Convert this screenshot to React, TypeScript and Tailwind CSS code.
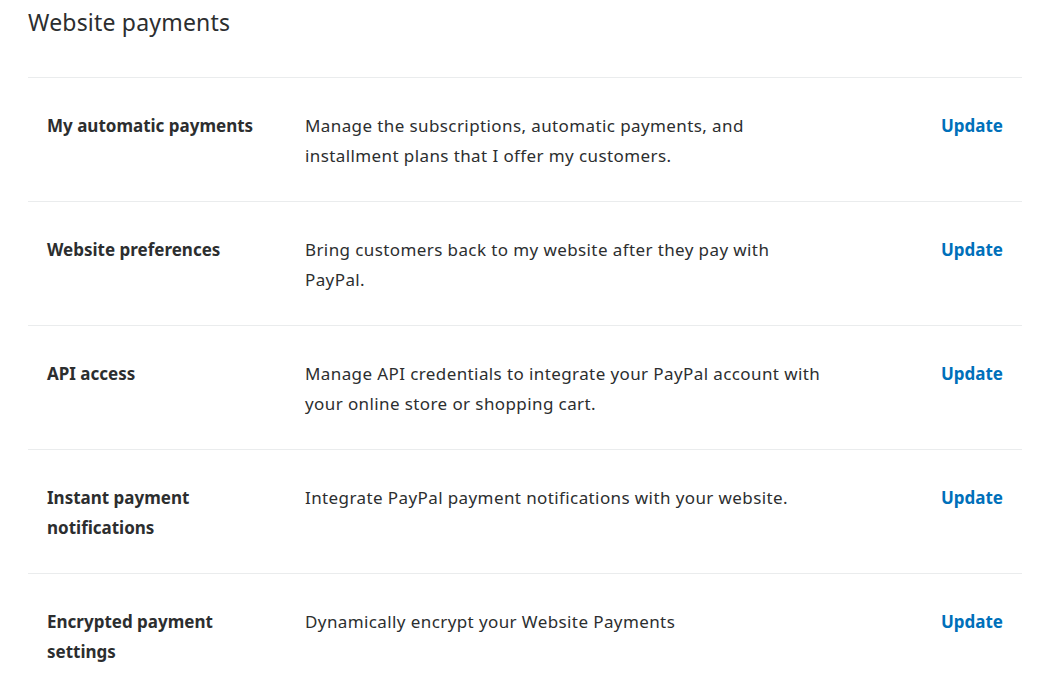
import React from "react";

const rows = [
  {
    label: "My automatic payments",
    desc: "Manage the subscriptions, automatic payments, and installment plans that I offer my customers.",
  },
  {
    label: "Website preferences",
    desc: "Bring customers back to my website after they pay with PayPal.",
  },
  {
    label: "API access",
    desc: "Manage API credentials to integrate your PayPal account with your online store or shopping cart.",
  },
  {
    label: "Instant payment notifications",
    desc: "Integrate PayPal payment notifications with your website.",
  },
  {
    label: "Encrypted payment settings",
    desc: "Dynamically encrypt your Website Payments",
  },
];

export default function App() {
  return (
    <div
      className="w-[1053px] h-[685px] overflow-hidden bg-white text-[#2c2e2f]"
      style={{ fontFamily: '"Noto Sans", "Open Sans", sans-serif' }}
    >
      <div className="pl-[28px] pr-[31px]">
        <h1 className="text-[23px] leading-[44px] font-normal tracking-[0.2px]">Website payments</h1>
        <div className="mt-[33px]">
          {rows.map((r) => (
            <div
              key={r.label}
              className="flex h-[124px] border-t border-[#eaeced] pt-[33px] pl-[19px] pr-[19px] text-[17px] leading-[30px]"
            >
              <div className="w-[258px] pr-[20px] font-bold shrink-0">{r.label}</div>
              <div className="w-[520px] shrink-0 tracking-[0.4px]">{r.desc}</div>
              <div className="flex-1 flex justify-end">
                <a className="font-bold text-[#0070ba]">Update</a>
              </div>
            </div>
          ))}
        </div>
      </div>
    </div>
  );
}
